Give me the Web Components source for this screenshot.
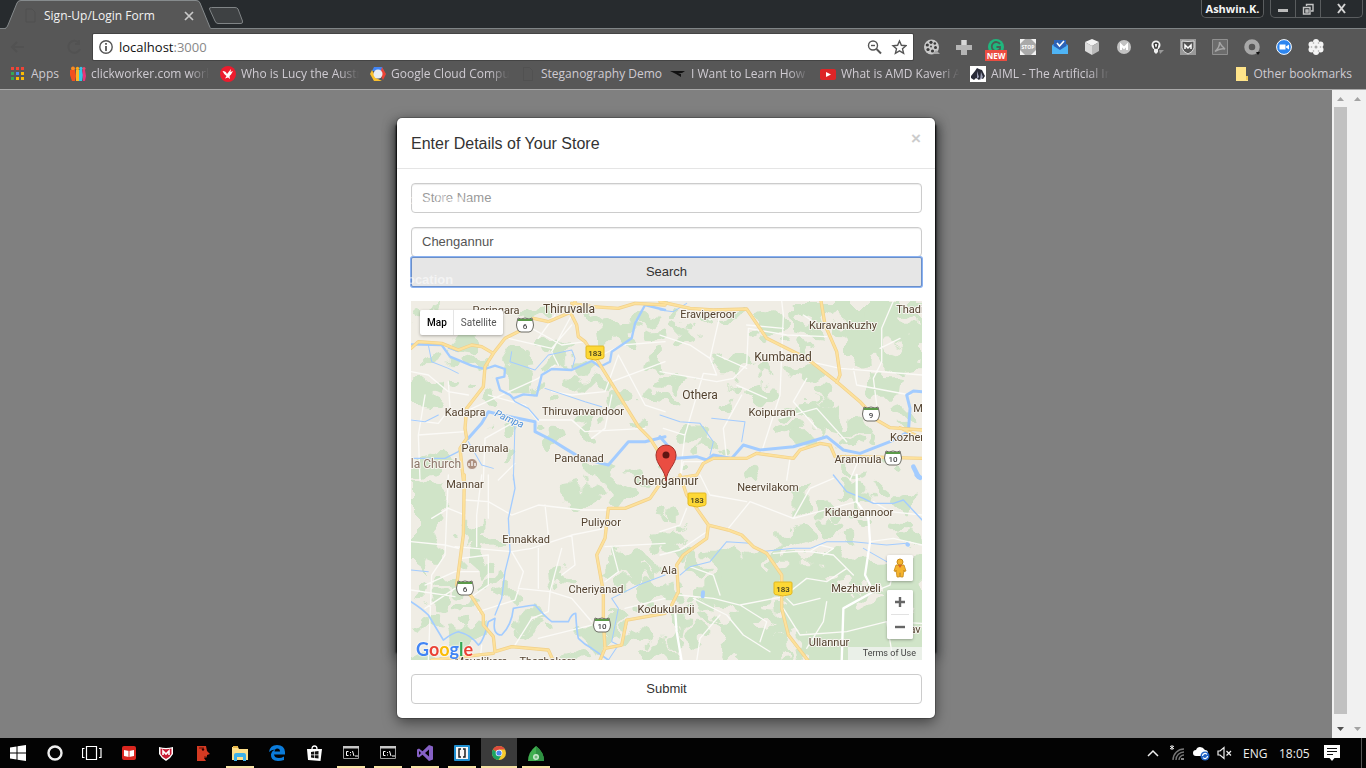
<!DOCTYPE html>
<html lang="en">
<head>
<meta charset="utf-8">
<title>Sign-Up/Login Form</title>
<style>
html, body { margin: 0; height: 100%; }
body { font-family: "Open Sans", "Noto Sans", sans-serif; font-size: 12px; overflow: hidden; }
</style>
</head>
<body>
<desktop-screen></desktop-screen>
<script>
const define = (name, html, setup) => {
  const tpl = document.createElement('template');
  tpl.innerHTML = html;
  customElements.define(name, class extends HTMLElement {
    constructor() {
      super();
      this.attachShadow({ mode: 'open' }).append(tpl.content.cloneNode(true));
    }
    connectedCallback() { if (setup) setup(this, this.shadowRoot); }
  });
};

define('tab-strip', `
<style>
:host { display: flex; height: 29px; background: #272b2e; border-bottom: 1px solid #7f8486; box-sizing: border-box; align-items: flex-start; }
.tab { position: relative; width: 206px; height: 29px; margin-left: 5px; display: flex; align-items: center; color: #f2f2f2; }
.tab svg.shape { position: absolute; inset: 0; }
.tab .title { position: relative; margin-left: 39px; flex: 1; line-height: 28px; padding-top: 2px; white-space: nowrap; }
.tab button { position: relative; border: 0; background: none; padding: 0; width: 10px; height: 10px; margin-right: 17px; margin-top: 2px; display: flex; }
.new { border: 0; background: none; padding: 0; margin: 6px 0 0 -3px; height: 20px; }
.space { flex: 1; }
.user { font: bold 11px/17px "Open Sans", "Noto Sans", sans-serif; color: #f5f5f5; background: #1f2224; border: 1px solid #5a5d5f; border-top: 0; border-radius: 0 0 5px 5px; padding: 0; width: 63px; height: 18px; margin-right: 6px; text-align: center; }
.win { display: flex; border: 1px solid #5a5d5f; border-top: 0; border-radius: 0 0 5px 5px; height: 18px; box-sizing: border-box; margin-right: 3px; }
.win button { background: none; border: 0; border-right: 1px solid #5a5d5f; padding: 0; width: 25px; height: 17px; display: flex; align-items: center; justify-content: center; }
.win button:last-child { border: 0; width: 41px; }
</style>
<div class="tab">
  <svg class="shape" width="206" height="29"><path d="M0 29Q2 28 3 25L12 3Q13 0 16 0H191Q194 0 195 3L204 25Q205 28 206 29Z" fill="#575757"/><path d="M0 28.500Q2 28 3 25L12 3Q13 .5 16 .5H191Q194 .5 195 3L204 25Q205 28 206 28.500" fill="none" stroke="#868b8d"/><path d="M21 9h6l3 3v10h-9z" fill="none" stroke="#505050"/></svg>
  <span class="title">Sign-Up/Login Form</span>
  <button aria-label="Close tab"><svg width="10" height="10"><path d="M1 1L9 9M9 1L1 9" stroke="#c9c9c9" stroke-width="1.700"/></svg></button>
</div>
<button class="new" aria-label="New tab"><svg width="36" height="19"><path d="M3.500 1.500H27Q29 1.500 30 3L34.500 15Q35 17.500 33 17.500H10Q8 17.500 7 15L1.500 3Q1 1.500 3.500 1.500Z" fill="#3e4143" stroke="#808486"/></svg></button>
<div class="space"></div>
<button class="user">Ashwin.K.</button>
<div class="win">
  <button aria-label="Minimize"><svg width="12" height="12"><path d="M1 6h10v3H1z" fill="#bbb"/></svg></button>
  <button aria-label="Restore"><svg width="12" height="12"><path d="M4.500 3V1.500H11V8H9M1.500 4.500H8V11H1.500zM4 7h2v2H4z" fill="none" stroke="#c4c4c4" stroke-width="1.400"/></svg></button>
  <button aria-label="Close"><svg width="12" height="12"><path d="M2 1L9 10M9 1L2 10" stroke="#d4d4d4" stroke-width="2"/></svg></button>
</div>`);

define('tool-bar', `
<style>
:host { display: flex; align-items: center; height: 36px; background: #575757; }
.nav { width: 93px; flex: none; display: flex; }
.omni { flex: 1; height: 26px; background: #fff; box-shadow: 0 0 0 1px #444; border-radius: 1px; display: flex; align-items: center; padding: 0 6px; box-sizing: border-box; }
.omni svg { flex: none; }
.url { position: relative; flex: 1; margin-left: 6px; display: flex; }
.url input { flex: 1; border: 0; outline: 0; padding: 0; font: 13px/24px "Open Sans", "Noto Sans", sans-serif; color: transparent; background: none; height: 24px; width: 100%; }
.url .shown { position: absolute; inset: 0; font-size: 13px; line-height: 24px; color: #888; pointer-events: none; }
.shown b { font-weight: 400; color: #111; }
.ext { display: flex; gap: 16px; margin: 0 42px 0 11px; }
.ext button { border: 0; padding: 0; background: none; width: 16px; height: 16px; position: relative; display: block; }
.ext svg { display: block; }
.badge { position: absolute; left: -3px; top: 11px; width: 22px; height: 11px; background: #ea4d41; color: #fff; font: bold 8px/11px "Open Sans", sans-serif; text-align: center; }
text { font-family: "Open Sans", sans-serif; font-weight: 700; }
</style>
<div class="nav"><svg width="93" height="20"><path d="M24 10H12M17 5L12 10L17 15M79 6A6 6 0 1 0 80 12M79 3V7H75" fill="none" stroke="#525252" stroke-width="2"/></svg></div>
<div class="omni">
  <svg width="14" height="14" viewBox="0 0 14 14"><circle cx="7" cy="7" r="6.200" fill="none" stroke="#555" stroke-width="1.400"/><path d="M7 6v5M7 3v1.800" stroke="#555" stroke-width="1.800"/></svg>
  <div class="url"><input aria-label="Address" value=""><span class="shown"><b>localhost</b>:3000</span></div>
  <svg width="40" height="16" viewBox="0 0 40 16"><g fill="none" stroke="#555" stroke-width="1.400"><circle cx="6" cy="6.500" r="4.500"/><path d="M9.500 10L14 14.500" stroke-width="2"/><path d="M4 6.500h4"/><path d="M32.500 2L34.400 6.300 39 6.700 35.500 9.800 36.600 14.300 32.500 11.900 28.400 14.300 29.500 9.800 26 6.700 30.600 6.300z"/></g></svg>
</div>
<div class="ext">
  <button aria-label="Film"><svg width="16" height="16"><circle cx="7.500" cy="8" r="7.500" fill="#c9c9c9"/><path d="M12 11l4 4H9z" fill="#a5a5a5"/><g fill="#3a3a3a"><circle cx="7" cy="3.300" r="1.600"/><circle cx="3.300" cy="6" r="1.600"/><circle cx="4" cy="10.500" r="1.600"/><circle cx="8.500" cy="12" r="1.600"/><circle cx="11.500" cy="8.500" r="1.500"/><circle cx="10.800" cy="4.500" r="1.300"/><circle cx="7" cy="7.500" r=".9"/></g></svg></button>
  <button aria-label="Plus"><svg width="16" height="16"><path d="M5 1h6v5h5v5h-5v5H5v-5H0V6h5z" fill="#b5b5b5"/><path d="M6 1h4v5H6z" fill="#d8d8d8"/></svg></button>
  <button aria-label="Grammar"><svg width="16" height="16"><circle cx="8" cy="8" r="8" fill="#1fb77d"/><path d="M12 5A4.500 4.500 0 1 0 12 10V8H8.500" fill="none" stroke="#4b5c55" stroke-width="1.800"/></svg><span class="badge">NEW</span></button>
  <button aria-label="Stop"><svg width="16" height="16"><path d="M0 0h16v16H0z" fill="#f2f2f2"/><path d="M5 0h6l5 5v6l-5 5H5l-5-5V5z" fill="#a9a9a9"/><text x="8" y="10" font-size="5" text-anchor="middle" fill="#fff">STOP</text></svg></button>
  <button aria-label="Inbox"><svg width="16" height="16"><path d="M0 6L8 1l8 5v9H0z" fill="#3c82d8"/><path d="M2 1h12v7l-6 4-6-4z" fill="#2b62b8"/><path d="M5 4l2.500 3L12 2" fill="none" stroke="#fff" stroke-width="1.600"/><path d="M0 6l8 5 8-5v9H0z" fill="#4fb4f5"/></svg></button>
  <button aria-label="Cube"><svg width="16" height="16"><path d="M8 0l7 3-7 4-7-4z" fill="#f3f3f3"/><path d="M1 3l7 4v9l-7-4z" fill="#dadada"/><path d="M15 3L8 7v9l7-4z" fill="#b9b9b9"/></svg></button>
  <button aria-label="M"><svg width="16" height="16"><circle cx="8" cy="8" r="7" fill="#c2c2c2"/><path d="M5 11V6l3 3 3-3v5" fill="none" stroke="#fff" stroke-width="2"/></svg></button>
  <button aria-label="Lamp"><svg width="16" height="16"><circle cx="8" cy="6" r="4.500" fill="#f2f2f2"/><path d="M6 5q2-2 4 0L9 9H7z" fill="none" stroke="#333" stroke-width="1.300"/><path d="M6 10h4v3l-2 2-2-2z" fill="#eee"/><path d="M11 11h5l-4 4z" fill="#999"/></svg></button>
  <button aria-label="Shield"><svg width="16" height="16"><path d="M0 0h16v16H0z" fill="#999"/><path d="M2 2Q8 3 14 2V9Q13 13 8 15 3 13 2 9z" fill="#555" stroke="#ddd"/><path d="M5 10V6l3 3 3-3v4" fill="none" stroke="#fff" stroke-width="1.500"/></svg></button>
  <button aria-label="PDF"><svg width="16" height="16"><path d="M.5.5h15v15H.5z" fill="#6c6c6c" stroke="#909090"/><path d="M7.500 3Q9 7 13 10 8 9 3 12.500 8 8 7.500 3" fill="none" stroke="#a5a5a5" stroke-width="1.400"/></svg></button>
  <button aria-label="Ring"><svg width="16" height="16"><circle cx="8" cy="8" r="5.500" fill="none" stroke="#a8a8a8" stroke-width="4.500"/><path d="M12 13h4l-2 3z" fill="#111"/></svg></button>
  <button aria-label="Video"><svg width="16" height="16"><circle cx="8" cy="8" r="7.400" fill="#2d86f0" stroke="#fff" stroke-width="1"/><path d="M3.500 5.500h6v5h-6zM10 7.500l3-2v5l-3-2z" fill="#fff"/></svg></button>
  <button aria-label="Flower"><svg width="16" height="16"><g fill="#f4f4f4"><circle cx="8" cy="3" r="3"/><circle cx="12.500" cy="5.500" r="3"/><circle cx="12.500" cy="10.500" r="3"/><circle cx="8" cy="13" r="3"/><circle cx="3.500" cy="10.500" r="3"/><circle cx="3.500" cy="5.500" r="3"/><circle cx="8" cy="8" r="4"/></g><g fill="#a8a8a8"><circle cx="8" cy="8" r="1.500"/><circle cx="5.500" cy="4" r=".8"/><circle cx="10.500" cy="4" r=".8"/><circle cx="12.500" cy="8" r=".8"/><circle cx="10.500" cy="12" r=".8"/><circle cx="5.500" cy="12" r=".8"/><circle cx="3.500" cy="8" r=".8"/></g></svg></button>
</div>`);

define('book-mark', `
<style>
:host { display: flex; width: 143px; flex: none; }
a { display: flex; align-items: center; gap: 5px; width: 100%; color: #cfcbd2; text-decoration: none; line-height: 18px; }
::slotted(svg) { flex: none; width: 16px; height: 16px; }
.name { flex: 1; overflow: hidden; white-space: nowrap; -webkit-mask: linear-gradient(90deg, #000 80%, transparent 97%); mask: linear-gradient(90deg, #000 80%, transparent 97%); }
:host([short]) .name { -webkit-mask: none; mask: none; }
:host([fit]) { width: auto; }
:host([fit]) a { gap: 4px; }
</style>
<a href="#"><slot name="icon"></slot><span class="name"><slot></slot></span></a>`);

define('bookmark-bar', `
<style>
:host { display: flex; align-items: center; gap: 7px; height: 25px; background: #575757; border-bottom: 1px solid #a9a9a9; box-sizing: border-box; padding: 0 14px 6px 10px; }
.apps { width: 53px; }
.space { flex: 1; }
</style>
<book-mark short class="apps"><svg slot="icon" viewBox="0 0 16 16"><path d="M1 1h3v3H1zM6 1h3v3H6zM11 1h3v3h-3z" fill="#f04438"/><path d="M1 6h3v3H1z" fill="#35a853"/><path d="M6 6h3v3H6z" fill="#4a8af4"/><path d="M11 6h3v3h-3z" fill="#fbbc05"/><path d="M1 11h3v3H1z" fill="#35a853"/><path d="M6 11h3v3H6zM11 11h3v3h-3z" fill="#fbbc05"/></svg>Apps</book-mark>
<book-mark><svg slot="icon" viewBox="0 0 16 16"><circle cx="3" cy="2.500" r="2" fill="#ff8a1f"/><circle cx="7.500" cy="2.500" r="1.700" fill="#fba919"/><circle cx="11" cy="2.500" r="1.700" fill="#35c4e8"/><circle cx="14" cy="2.500" r="1.500" fill="#f0446f"/><path d="M0 4h5l1 6-1 5H2L0 9z" fill="#f2501f"/><path d="M6 4h3v11H6z" fill="#fbb829"/><path d="M9 4h3l1 5-1 6H9z" fill="#35c4e8"/><path d="M12.500 4H15l1 6-1 5h-2z" fill="#e8347a"/></svg>clickworker.com workp</book-mark>
<book-mark><svg slot="icon" viewBox="0 0 16 16"><circle cx="8" cy="8" r="8" fill="#ec1c2e"/><path d="M2.500 5Q6 5 7 8L11 3 10.500 6 13 5 11 8.500 9.500 10 10 13 8 11.500 5 12.500 6.500 10Q4 8.500 2.500 5" fill="#fff"/></svg>Who is Lucy the Austr</book-mark>
<book-mark><svg slot="icon" viewBox="0 0 16 16"><path d="M4 1h8l2 4H2z" fill="#4285f4"/><path d="M12 1l4 7-3 6-3-6z" fill="#ea4335"/><path d="M0 8l2-4 4 8 6 3H4z" fill="#fbc02d"/><circle cx="8" cy="8" r="4.500" fill="#e9edf4"/></svg>Google Cloud Compu</book-mark>
<book-mark short><svg slot="icon" viewBox="0 0 16 16"><path d="M3.500 1.500h6l3 3v10h-9z" fill="none" stroke="#515151"/></svg>Steganography Demo</book-mark>
<book-mark><svg slot="icon" viewBox="0 0 16 16"><path d="M0 5h15l-3 2H8l3 1v3L6 8z" fill="#111"/></svg>I Want to Learn How t</book-mark>
<book-mark><svg slot="icon" viewBox="0 0 16 16"><rect y="3" width="16" height="11" rx="2" fill="#dd2527"/><path d="M6 6l5 2.500L6 11z" fill="#fff"/></svg>What is AMD Kaveri A</book-mark>
<book-mark><svg slot="icon" viewBox="0 0 16 16"><path d="M0 0h16v16H0z" fill="#fff"/><path d="M1 10l4-5 2-3 2 1 3 1 3 6-2 3-2-1-2 2-3-2-2 2-3-2z" fill="#2a2c38"/><path d="M7 5l2 6-2 2zM11 6l2 5-3 3z" fill="#9a9db4"/></svg>AIML - The Artificial In</book-mark>
<div class="space"></div>
<book-mark short fit><svg slot="icon" viewBox="0 0 16 16"><path d="M3 1h10v9l2 1v4H3z" fill="#ffe48a"/><path d="M13 10h2v4h-2z" fill="#f1cb57"/></svg>Other bookmarks</book-mark>`);

define('area-map', `
<style>
:host { display: block; position: relative; height: 359px; overflow: hidden; background: #f0ede5; font-family: Roboto, sans-serif; }
svg.tiles { display: block; width: 511px; height: 360px; }
.place text { font-size: 11px; fill: #53422f; stroke: #f7f5f0; stroke-width: 2px; paint-order: stroke; stroke-linejoin: round; }
.place text.m, .place text.l { font-size: 12px; }
.place text.water { fill: #4a8fdc; font-style: italic; font-size: 10px; }
.place text.poi { fill: #8a7568; font-size: 12px; }
.types { position: absolute; left: 9px; top: 9px; display: flex; background: #fff; border-radius: 2px; box-shadow: 0 1px 3px rgba(0,0,0,.3); height: 25px; }
.types button { border: 0; background: none; padding: 0 6px 0 7px; font: 10px/25px Roboto, sans-serif; color: #565656; }
.types button:first-child { color: #000; font-weight: 500; border-right: 1px solid #e5e5e5; }
.side { position: absolute; right: 9px; bottom: 21px; display: grid; gap: 9px; width: 26px; }
.side button { border: 0; padding: 0; background: #fff; width: 26px; height: 26px; display: flex; align-items: center; justify-content: center; border-radius: 2px; }
.card { background: #fff; border-radius: 2px; box-shadow: 0 1px 3px rgba(0,0,0,.3); }
.card hr { border: 0; height: 1px; background: #e2e2e2; margin: 0 4px; }
.side .zoom button { height: 24px; }
.terms { position: absolute; right: 0; bottom: 0; padding: 0 6px 0 15px; background: rgba(245,245,245,.7); color: #444; font-size: 9px; line-height: 13px; text-decoration: none; }
.brand { position: absolute; left: 5px; bottom: 0; font: 700 18px/22px Lato, sans-serif; text-decoration: none; text-shadow: 0 0 2px #fff, 0 0 2px #fff; }
.brand span { color: #4285f4; } .brand .r { color: #ea4335; } .brand .y { color: #fbbc05; } .brand .g { color: #34a853; }
</style>
<svg class="tiles" viewBox="0 0 511 360" aria-hidden="true">
  <defs><filter id="rough" filterUnits="userSpaceOnUse" x="-10" y="-10" width="540" height="390"><feTurbulence type="fractalNoise" baseFrequency="0.05" numOctaves="2" seed="8"/><feDisplacementMap in="SourceGraphic" scale="42" xChannelSelector="R" yChannelSelector="G"/></filter></defs>
  <g class="land" filter="url(#rough)" fill="#d0e4c8"></g>
  <g class="lines" fill="none" stroke-linejoin="round" stroke-linecap="round"></g>
  <g class="place"></g>
  <g class="signs"></g>
  <g transform="translate(255 154)"><path d="M0 26C-1 14-10 10-10 0A10 10 0 0 1 10 0C10 10 1 14 0 26Z" fill="#ea4d42" stroke="#a3312a"/><circle r="3.500" fill="#5e1511"/></g>
</svg>
<a class="brand" href="#" aria-label="Google"><span>G</span><span class="r">o</span><span class="y">o</span><span>g</span><span class="g">l</span><span class="r">e</span></a>
<a class="terms" href="#">Terms of Use</a>
<div class="types"><button>Map</button><button>Satellite</button></div>
<div class="side">
  <div class="card"><button aria-label="Street view"><svg width="14" height="20"><circle cx="7" cy="4" r="3" fill="#f5b32d" stroke="#c68b1c"/><path d="M3 7h8l2 6-2 .5V12l-1 7H7.500V15h-1v4H4L3 12v1.500L1 13z" fill="#f5b32d" stroke="#c68b1c" stroke-width=".8"/><path d="M5 7l2 3 2-3z" fill="#d8622c"/></svg></button></div>
  <div class="card zoom"><button aria-label="Zoom in"><svg width="10" height="10"><path d="M5 0v10M0 5h10" stroke="#666" stroke-width="2.400"/></svg></button><hr><button aria-label="Zoom out"><svg width="10" height="10"><path d="M0 5h10" stroke="#666" stroke-width="2.400"/></svg></button></div>
</div>`, (host, root) => {
  // Each sector has its own origin; one sector unit is a third of a map pixel.
  const sectors = [
    { at: '-6 -6',
      wood: 'M18 265L60 262 108 285 100 320 60 350 18 345zM95 45L230 120 210 155 150 150 120 90zM275 245L330 160 390 190 395 240 380 280 330 290 300 260z',
      blobs: [[190,180,36,14],[40,60,14,12],[90,190,30,12],[450,150,40,14],[440,190,28,16],[510,250,28,12],[570,265,24,10],[650,110,32,24],[700,60,26,30],[600,90,18,30],[560,60,20,10],[740,120,18,12],[610,330,24,20],[640,290,34,12],[740,290,26,10],[695,385,16,10],[540,400,22,30],[430,425,20,12],[300,385,34,14],[95,490,38,14],[40,512,22,10],[580,528,30,12],[250,310,14,18],[450,300,16,10],[150,260,18,8],[380,45,30,10],[290,475,10,8],[690,530,16,8],[750,200,20,18],[520,210,30,8]],
      water: [[7,'M18 148L110 150 135 185 200 212 240 222 270 212 300 222 298 245 275 250 285 285 315 300 325 310 355 298 395 302 410 240 440 222 500 225 560 198 585 215 615 200 620 170 680 130 690 85 720 30 780 45'],[9,'M190 430L230 385 250 350 290 360 390 380 390 410 440 435 480 460 530 490 610 510 670 440 720 440 780 425'],[4,'M18 490L120 490 160 470 190 430M315 300L330 320 370 340 400 375'],[3,'M130 160L160 170M70 150L80 200 130 220 160 235M320 170L315 200 390 225 430 180 500 165 510 190 500 225M420 280L540 320 590 335M18 375L60 380 100 360M330 385L325 555M265 520L230 510 190 440']],
      minor: 'M18 230L70 240 130 290 190 300M130 260L135 340 100 385 18 375M190 345L400 250 450 210M400 375L500 375 540 410 720 400M380 100L470 150 540 140M500 60L440 170 460 210M235 555L240 430 330 380M400 380L360 330 250 300M620 300L600 400 560 430M570 190L650 150 780 140M280 555L330 505M620 260L700 230 780 200M40 420L180 410M60 300L40 420 45 555M450 60L400 130M310 130L440 160 500 90M640 180L720 330 780 350M640 180L600 290 500 300 440 290',
      major: 'M18 160L40 140 110 145 160 165 200 150 230 155 265 175 300 130 360 100M265 175L240 215 235 275 185 340 180 400 185 430 165 460 175 555M385 70L430 80 500 50 510 20M495 50L515 90 520 125 540 140 570 185 700 395 735 430 760 470 775 520M500 25L560 35 640 40 690 25 780 30' },
    { at: '249 -6',
      wood: 'M395 18L786 18 786 225 700 235 640 200 590 210 560 150 540 90 500 60 470 110 400 100zM460 310L550 330 540 400 470 390zM620 240L720 250 710 320 640 320z',
      blobs: [[210,200,48,22],[40,85,26,10],[70,120,16,20],[330,70,38,22],[290,110,14,10],[200,60,26,12],[120,70,24,12],[420,340,60,16],[370,400,40,14],[580,390,50,18],[560,440,26,10],[640,420,18,10],[90,410,48,22],[135,450,24,20],[740,350,18,10],[30,250,36,10],[230,270,20,12],[310,290,34,20],[300,230,22,12],[430,240,34,12],[500,290,26,14],[410,140,20,14],[720,400,22,8],[40,520,16,8],[260,520,20,8],[200,330,18,16],[10,300,20,12],[430,420,22,10],[700,510,20,10],[560,520,30,8],[30,40,16,10],[650,80,60,40]],
      holes: [[690,140,28,10],[740,60,10,4],[430,60,10,14]],
      water: [[9,'M0 425L30 460 50 490 110 485 140 495 160 480 215 490 250 450 300 465 400 455 500 425 550 465 600 475 690 440 745 410 750 340 740 300 760 288 786 290'],[3,'M0 360L60 380 120 385 160 440 150 480M155 370L255 380 245 440M0 45L40 50 80 25'],[14,'M760 515L775 545']],
      minor: 'M180 60L150 190 170 240 130 235 75 420 65 500 60 555M0 230L170 260 220 250 260 210 265 100 380 120 500 125M365 18L370 60 360 300 305 470M786 240L540 220 450 200M700 18L665 100 665 200 640 250M580 220L590 270 750 300M100 40L150 75 180 60M245 300L190 400 200 490M360 370L470 340 560 440M0 120L90 150 150 190M260 90L370 100M170 180L260 220M440 250L400 320 470 400M720 130L660 160M640 250L650 330M230 270L320 310M430 60L490 100M75 420L10 400M60 555L70 500 130 500M390 490L380 555M600 485L570 555',
      major: 'M0 20L90 40 160 45 260 42 320 130 380 160 440 190 530 260 600 320 650 375 690 398 786 405M483 18L495 90 530 170 540 240 530 262M20 555L110 540 130 505 160 490 260 490 290 475 400 490 420 465 480 445 510 450 525 485 600 485 786 490M720 398L786 430' },
    { at: '-6 174',
      wood: 'M18 10L125 20 120 120 80 250 60 300 18 285zM600 420L665 430 650 500 600 510zM110 450L230 440 230 500 130 505z',
      blobs: [[510,45,52,30],[610,22,26,20],[625,55,22,16],[540,85,28,10],[200,170,24,18],[240,200,30,14],[210,250,18,30],[240,310,26,12],[100,390,34,20],[60,440,16,14],[50,540,44,12],[440,285,20,26],[680,250,50,34],[605,265,20,16],[700,470,36,16],[560,485,28,36],[740,520,32,18],[375,415,34,10],[380,455,26,14],[740,340,26,26],[700,390,18,14],[130,330,26,16],[480,310,12,8],[760,190,20,12],[650,330,14,26],[300,340,12,16],[40,340,20,20],[180,385,18,10],[500,545,26,8],[760,110,12,8],[690,300,30,8]],
      water: [[5,'M18 380Q50 400 70 420L115 495Q140 475 160 470 200 480 220 510 235 500 250 440L270 430Q260 480 290 480 320 450 325 400 350 395 390 390 420 425 440 440 470 440 490 440 500 415 512 415 515 470 520 490 540 510 560 520L610 555'],[4,'M325 0L330 40 310 130 315 230 300 290 290 370 270 420'],[3,'M18 285L70 290M620 370L640 400 620 500 640 510 610 555M620 370L700 330 780 300']],
      minor: 'M180 75L250 80 320 120 400 90 530 105 610 105M130 0L120 240 80 300 70 558M150 215L320 230 380 220 500 180 600 160M320 230L355 290 340 340 435 350 470 220M435 350L430 410 380 430 330 510M600 215L780 205M200 365L250 330 250 240 170 250M220 410L330 375 340 345M18 345L150 365M80 130L130 100 180 120M230 0L215 120 215 215M250 0L250 130M400 220L400 340M500 180L510 270 470 300M420 90L430 180M18 200L120 210 160 220M60 330L150 290 220 290M60 400L150 340M230 510L225 558M435 350L500 370 560 440M620 215L640 290 600 320M660 400L780 370M400 490L560 450',
      major: 'M178 0L175 180 155 330 180 340 200 365 235 420 235 450 265 485 270 530 320 515 430 525 445 558M80 555L265 535M780 5L735 70 660 100 610 100 600 190 575 240 595 350 595 440 600 520 585 555M600 520L650 510 665 435 780 415' },
    { at: '249 174',
      wood: 'M130 290L190 215 290 240 340 290 370 250 460 250 560 240 600 260 800 250 800 590 440 590 400 480 330 500 240 430 130 330zM400 40L450 30 440 110 400 130zM130 440L300 430 400 520 420 590 240 590z',
      blobs: [[500,100,30,18],[560,35,26,16],[600,60,18,20],[720,75,30,30],[365,195,14,24],[415,190,28,22],[490,150,18,14],[40,130,22,10],[30,180,24,14],[60,210,28,10],[90,250,24,16],[720,150,24,12],[600,130,18,16],[660,30,24,10],[760,180,16,14],[60,420,22,26],[100,480,20,28],[180,350,50,24],[340,240,20,14],[30,480,16,28],[550,190,20,8],[20,540,22,12],[140,400,20,18],[20,340,20,20],[90,360,20,14]],
      holes: [[560,320,34,6],[620,370,30,6],[500,290,14,4],[330,385,40,3],[360,540,18,4],[730,390,12,2],[640,330,16,4],[200,540,12,6],[310,440,18,3]],
      water: [[4,'M520 0L560 50 610 70 640 85 700 85 730 75 786 135'],[3,'M60 300L90 275 150 260 200 200 270 205 300 230 400 220 450 220 500 200 580 200 680 210 740 205M610 220L680 260'],[14,'M770 0L780 8'],[12,'M129 352L128 364M742 208L744 209']],
      minor: 'M0 240L60 225 140 170M340 235L400 230 450 230 520 240 580 300M55 360L160 370 240 390 370 365M370 400L420 480 560 470 680 440 786 445M100 370L200 420 250 480 330 530M205 160L270 80 400 130 590 80M640 350L690 330 700 290M450 230L480 210 520 220 490 240M400 130L450 40 520 10M370 365L440 310 500 320 560 280M120 0L150 60 260 80M90 275L160 300 180 360M380 370L400 390 480 370M440 520L490 440 500 380M180 420L120 490 110 558M240 390L320 440 300 500M640 80L690 110 786 120M630 200L700 190 786 210M680 440L700 558M0 170L60 150 80 100',
      wide: 'M590 0L590 80 625 130 630 200 615 300 640 350 550 400 545 558M45 400L50 470 65 558',
      major: 'M60 0L80 60 110 100 145 150 205 165 245 180 280 215 320 235 365 300 365 400 385 480 445 558M145 150L140 190 70 240 50 270 55 350 35 390' }
  ];
  const place = at => `transform="translate(${at}) scale(.3334)"`;
  const ovals = (list, fill) => (list || []).map(([x, y, a, b]) => `<ellipse cx="${x + 8}" cy="${y + 8}" rx="${a + 8}" ry="${b + 8}" ${fill}/>`).join('');
  root.querySelector('.land').innerHTML = sectors.map(s =>
    `<g ${place(s.at)}><path d="${s.wood}"/>${ovals(s.blobs, '')}${ovals(s.holes, 'fill="#f0ede5"')}</g>`).join('');
  const layer = draw => sectors.map(s => `<g ${place(s.at)}>${draw(s)}</g>`).join('');
  root.querySelector('.lines').innerHTML =
    layer(s => `<path d="${s.minor}" stroke="#fbfaf7" stroke-width="4"/>`) +
    layer(s => s.water.map(([w, d]) => `<path d="${d}" stroke="#a3ccff" stroke-width="${w}"/>`).join('')) +
    layer(s => s.wide ? `<path d="${s.wide}" stroke="#fff" stroke-width="7"/>` : '') +
    layer(s => `<path d="${s.major}" stroke="#f1d08a" stroke-width="10"/>`) +
    layer(s => `<path d="${s.major}" stroke="#fde19b" stroke-width="6"/>`);

  const names = [[85,9,'Peringara'],[158,8,'Thiruvalla','l'],[297,13,'Eraviperoor'],[499,8,'Thadi'],[432,24,'Kuravankuzhy'],[372,56,'Kumbanad','m'],[289,94,'Othera','m'],[361,111,'Koipuram'],[54,111,'Kadapra'],[172,110,'Thiruvanvandoor'],[74,147,'Parumala'],[168,157,'Pandanad'],[25,163,'la Church','poi'],[54,183,'Mannar'],[255,180,'Chengannur','l'],[357,186,'Neervilakom'],[448,211,'Kidangannoor'],[190,221,'Puliyoor'],[115,238,'Ennakkad'],[258,269,'Ala'],[185,288,'Cheriyanad'],[255,308,'Kodukulanji'],[445,287,'Mezhuveli'],[418,341,'Ullannur'],[447,158,'Aranmula'],[496,136,'Kozher'],[507,107,'M'],[70,360,'Mavelikara'],[137,360,'Thazhakara'],[504,328,'av']];
  root.querySelector('.place').innerHTML = names.map(([x, y, t, c]) => `<text x="${x}" y="${y + 4}" text-anchor="middle" class="${c || ''}">${t}</text>`).join('') +
    '<text class="water" text-anchor="middle" transform="translate(97 121) rotate(24)">Pampa</text>' +
    '<circle cx="61" cy="163" r="5.500" fill="#ac8f7f" stroke="#fff" stroke-width=".7"/><path d="M58 165v-3M61 165v-5M64 165v-3" stroke="#fff" stroke-width="1.300"/>';

  const sign = 'font-family="Roboto, sans-serif" font-size="8" font-weight="500" text-anchor="middle"';
  root.querySelector('.signs').innerHTML =
    [[184,52],[286,199],[372,288]].map(([x, y]) => `<path d="M${x-9} ${y-6}Q${x-9} ${y-7} ${x-8} ${y-7}H${x+8}Q${x+9} ${y-7} ${x+9} ${y-6}V${y+4}Q${x+9} ${y+6} ${x+5} ${y+6}L${x} ${y+7} ${x-5} ${y+6}Q${x-9} ${y+6} ${x-9} ${y+4}Z" fill="#fdd835" stroke="#e2b722"/><text x="${x}" y="${y+3}" ${sign} fill="#3d3a20">183</text>`).join('') +
    [[114,24,6],[54,287,6],[460,113,9],[482,157,10],[191,324,10]].map(([x, y, n]) => `<path d="M${x-7} ${y-7}l3 1 4-1 4 1 3-1 1 4q1 3 0 6-1 4-4 4h-8q-3 0-4-4-1-3 0-6z" fill="#fff" stroke="#6b6b62"/><path d="M${x-7} ${y-6}h14v2h-14z" fill="#5c9a4a"/><text x="${x}" y="${y+4}" ${sign} fill="#444">${n}</text>`).join('');
});

define('store-dialog', `
<style>
:host { display: block; position: relative; box-sizing: border-box; width: 100%; max-width: 538px; isolation: isolate; font-family: "Liberation Sans", Arial, sans-serif; }
:host::before { content: ""; position: absolute; inset: 8px 0 66px; z-index: -1; box-shadow: 0 2px 10px 4px rgba(19,25,28,.4), 0 0 2px 1px #000; }
.box { background: #fff; border-radius: 5px; box-shadow: 0 4px 14px rgba(0,0,0,.5), 0 0 0 1px rgba(0,0,0,.2); }
header { display: flex; justify-content: space-between; height: 50px; border-bottom: 1px solid #e5e5e5; padding: 0 14px; }
h4 { margin: 0; font-weight: 400; font-size: 16px; line-height: 52px; color: #333; }
.close { border: 0; background: none; padding: 0; width: 10px; height: 42px; color: #ccc; font: bold 17px/42px "Liberation Sans", sans-serif; }
form { display: grid; gap: 14px; padding: 14px 13px 14px 14px; }
.group { position: relative; display: grid; }
label { position: absolute; left: -12px; font-weight: 700; font-size: 13px; line-height: 16px; color: rgba(255,255,255,.55); pointer-events: none; z-index: 1; }
.name label { top: 9px; }
.place label { top: 45px; }
input, button.wide { box-sizing: border-box; width: 100%; height: 30px; border: 1px solid #ccc; border-radius: 4px; font: 13px/18px "Liberation Sans", Arial, sans-serif; color: #555; background: #fff; padding: 0 10px 2px; outline: 0; }
input { box-shadow: inset 0 1px 1px rgba(0,0,0,.08); }
input::placeholder { color: #999; opacity: 1; }
button.wide { color: #333; padding-bottom: 1px; }
button.search { background: #e6e6e6; border-color: #6b8fc9; box-shadow: 0 0 0 1px #8ab2f2; border-radius: 2px; }
</style>
<div class="box" role="dialog" aria-label="Enter Details of Your Store">
  <header><h4>Enter Details of Your Store</h4><button class="close" aria-label="Close">×</button></header>
  <form onsubmit="return false">
    <div class="group name"><label for="store">Store Name</label><input id="store" placeholder="Store Name"></div>
    <div class="group place"><label for="loc">Location</label><input id="loc" value="Chengannur"><button type="button" class="wide search">Search</button></div>
    <area-map></area-map>
    <button class="wide">Submit</button>
  </form>
</div>`);

define('scroll-column', `
<style>
:host { display: flex; flex-direction: column; align-items: center; width: 17px; background: #f1f1f1; }
svg { width: 17px; height: 17px; flex: none; }
.thumb { flex: 1; width: 13px; margin-bottom: 7px; }
:host([active]) .thumb { background: #c1c1c1; }
path { fill: #a3a3a3; }
:host([active]) .down path { fill: #505050; }
</style>
<svg><path d="M5 11L8.500 7 12 11z"/></svg><div class="thumb"></div><svg class="down"><path d="M5 6L8.500 10 12 6z"/></svg>`);

define('task-item', `
<style>
:host { display: block; width: 36px; height: 30px; flex: none; }
button { width: 100%; height: 100%; box-sizing: border-box; border: 0; padding: 0 4px; background: none; display: flex; align-items: center; justify-content: center; position: relative; }
:host([active]) button { background: #3b3b3b; }
:host([open]) button::after { content: ""; position: absolute; left: 4px; right: 4px; bottom: 0; height: 2px; background: #f6e2a4; }
:host([active]) button::after { left: 0; right: 0; }
</style>
<button><slot></slot></button>`, (host, root) => root.querySelector('button').setAttribute('aria-label', host.getAttribute('label')));

define('task-bar', `
<style>
:host { display: flex; align-items: center; gap: 1px; height: 30px; background: #030303; color: #eee; flex: none; }
.space { flex: 1; }
.tray { display: flex; align-items: center; }
.tray svg { display: block; }
.gap { margin-left: 7px; }
.lang { margin-left: 10px; width: 24px; }
.time { margin-left: 12px; width: 28px; }
.note { margin-left: 17px; margin-right: 20px; }
.edge { width: 1px; height: 30px; background: #555; margin-right: 4px; }
</style>
<task-item label="Start"><svg width="16" height="16"><path d="M0 2.500L6.500 1.500V7.500H0zM7.500 1.300L16 0V7.500H7.500zM0 8.500H6.500V14.500L0 13.500zM7.500 8.500H16V16L7.500 14.700z" fill="#fff"/></svg></task-item>
<task-item label="Cortana"><svg width="16" height="16"><circle cx="8" cy="8" r="6.500" fill="none" stroke="#eee" stroke-width="2.400"/></svg></task-item>
<task-item label="Task view"><svg width="20" height="16"><path d="M4.500 1.500h10v13h-10zM2.500 3.500h-2v9h2M17 3.500h2v9h-2" fill="none" stroke="#fff" stroke-width="1.200"/></svg></task-item>
<task-item label="Reader"><svg width="14" height="14"><rect width="14" height="14" rx="2" fill="#d9261f"/><path d="M2 4l5 1 5-1v6l-5 1-5-1z" fill="#fff"/><path d="M7 5v6" stroke="#d9261f"/></svg></task-item>
<task-item label="McAfee"><svg width="14" height="15"><path d="M0 1Q7 3 14 1V8Q12 12 7 15 2 12 0 8z" fill="#fff"/><path d="M1.500 2.500Q7 4 12.500 2.500V8Q11 11 7 13 3 11 1.500 8z" fill="#c81b32"/><path d="M4 9V5l3 3 3-3v4" fill="none" stroke="#fff" stroke-width="1.600"/></svg></task-item>
<task-item label="Face"><svg width="14" height="16"><path d="M1 1h9l1 5 3 3-3 1v2L8 13l2 3H1z" fill="#d43a22"/><circle cx="7" cy="4.500" r="1.200" fill="#300"/><path d="M3 3h5M8 12h3" stroke="#601408"/></svg></task-item>
<task-item label="Explorer" open><svg width="16" height="15"><path d="M0 1h6l1 2h9v11H0z" fill="#ffe08a"/><path d="M1 0h5v2H1z" fill="#e8b84a"/><path d="M2 15V9Q2 7 4 7h8q2 0 2 2v6h-3v-4H5v4z" fill="#3eb1e8"/></svg></task-item>
<task-item label="Edge"><svg width="16" height="16"><path d="M0 7Q1 0 8 0 15.500 0 16 7V9.500H5Q5.500 13 10 13 12.500 13 15 11.500V15Q12 16 9 16 1.500 16 2 9.500 2.500 6 6 4.500 2.500 4.500 0 7zM5.500 6.500H11Q11 3.500 8.200 3.500 6 3.500 5.500 6.500z" fill="#0b7cdb" fill-rule="evenodd"/></svg></task-item>
<task-item label="Store"><svg width="15" height="16"><path d="M0 4h15l-1.500 12L1 15z" fill="#fff"/><path d="M5 4Q5 1 7.500 1T10 4" fill="none" stroke="#fff" stroke-width="1.300"/><path d="M4 7l3-.5V9.500H4zM7.700 6.400L11.500 6v3.500H7.700zM4 10.200h3V13l-3-.4zM7.700 10.200h3.800v3.400l-3.800-.5z" fill="#111"/></svg></task-item>
<task-item label="Console" open><svg width="16" height="14"><path d="M.5.5h15v12H.5z" fill="#000" stroke="#9b9b9b"/><path d="M0 0h16v2.500H0z" fill="#c6c6c6"/><path d="M5.500 5.500h-2v4h2M7 6.500h1M7 9h1M9.500 5l1.500 5M12 10h3" fill="none" stroke="#fff"/></svg></task-item>
<task-item label="Console" open><svg width="16" height="14"><path d="M.5.5h15v12H.5z" fill="#000" stroke="#9b9b9b"/><path d="M0 0h16v2.500H0z" fill="#c6c6c6"/><path d="M5.500 5.500h-2v4h2M7 6.500h1M7 9h1M9.500 5l1.500 5M12 10h3" fill="none" stroke="#fff"/></svg></task-item>
<task-item label="Visual Studio" open><svg width="16" height="16"><path d="M12 0l4 1.500v13L12 16 5.500 9.800 2 12.500 0 11.500v-7L2 3.500 5.500 6.200zM12 4.500L8 8l4 3.500zM2 6v4l2-2z" fill="#8661c5" fill-rule="evenodd"/></svg></task-item>
<task-item label="Brackets" open><svg width="16" height="16"><rect width="16" height="16" rx="1" fill="#1f8fd0"/><path d="M2 2h12v12H2z" fill="#f7f7f7"/><path d="M7 4H5v8h2M9 4h2v8H9" fill="none" stroke="#222" stroke-width="1.500"/></svg></task-item>
<task-item label="Chrome" open active><svg width="14" height="14"><circle cx="7" cy="7" r="7" fill="#f7cb2d"/><path d="M7 7L.9 3.500A7 7 0 0 1 13.100 3.500H7z" fill="#dd4b3e"/><path d="M.9 3.500A7 7 0 0 0 6.500 14L9.500 9z" fill="#1da362"/><circle cx="7" cy="7" r="3.300" fill="#fff"/><circle cx="7" cy="7" r="2.600" fill="#4a87ee"/></svg></task-item>
<task-item label="Android" open><svg width="16" height="16"><path d="M8 1Q16 7 16 16H0Q0 7 8 1z" fill="#3fae4f"/><path d="M8 1Q16 7 16 16H8z" fill="#2f9142"/><circle cx="8" cy="12" r="3" fill="#c9e8cd"/><circle cx="8" cy="12" r="1.500" fill="#6fba79"/></svg></task-item>
<div class="space"></div>
<div class="tray">
  <svg width="12" height="8"><path d="M1 7l5-5 5 5" fill="none" stroke="#eee" stroke-width="1.500"/></svg>
  <svg class="gap" width="20" height="16"><path d="M6 0v5M4 1l4 3M8 1L4 4" stroke="#eee"/><path d="M7 15A11 11 0 0 1 18 4M10 15A8 8 0 0 1 18 7M13 15A5 5 0 0 1 18 10" fill="none" stroke="#777" stroke-width="1.400"/><path d="M15 13h3v2h-3z" fill="#888"/></svg>
  <svg class="gap" width="17" height="16"><path d="M3 11Q0 11 0 8T3 5Q4 2 7 2t5 3q3 0 3 3v3z" fill="#fff"/><circle cx="12" cy="11" r="4.500" fill="#1f62c4"/><path d="M9.500 11A2.500 2.500 0 0 1 14 9.500M14.500 11A2.500 2.500 0 0 1 10 12.500" fill="none" stroke="#fff" stroke-width="1.200"/></svg>
  <svg class="gap" width="16" height="14"><path d="M1 5h2l4-3.500v11L3 9H1z" fill="none" stroke="#eee" stroke-width="1.200"/><path d="M9.500 5l4.500 4.500M14 5L9.500 9.500" stroke="#eee" stroke-width="1.200"/></svg>
  <span class="lang">ENG</span><span class="time">18:05</span>
  <svg class="note" width="16" height="16"><path d="M0 0h16v13h-5.500L8 16 5.500 13H0z" fill="#fff"/><path d="M3 3.500h10M3 6.500h10M3 9.500h6" stroke="#111"/></svg>
</div>
<div class="edge"></div>`);

define('desktop-screen', `
<style>
:host { display: flex; flex-direction: column; height: 100vh; min-width: 1000px; }
tab-strip, tool-bar, bookmark-bar { flex: none; }
main { flex: 1; min-height: 0; display: flex; background: #808080; }
.view { flex: 1; display: flex; justify-content: center; align-items: flex-start; padding-top: 28px; overflow: hidden; }
</style>
<tab-strip></tab-strip><tool-bar></tool-bar><bookmark-bar></bookmark-bar>
<main><div class="view"><store-dialog></store-dialog></div><scroll-column active></scroll-column><scroll-column></scroll-column></main>
<task-bar></task-bar>`);
</script>
</body>
</html>
